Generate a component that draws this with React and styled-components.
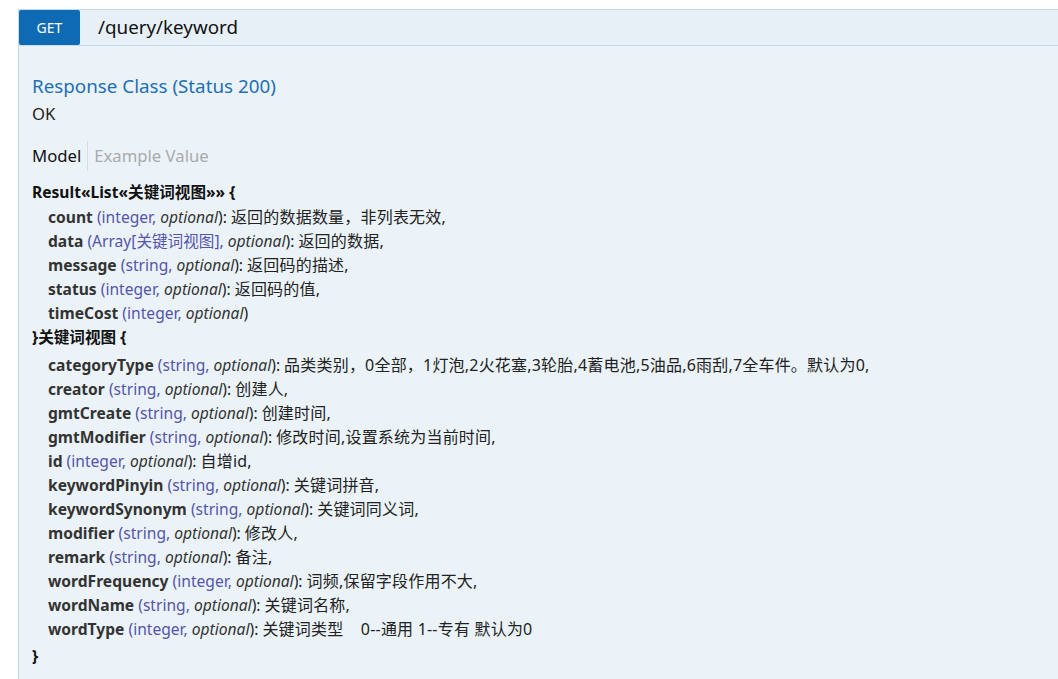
import styled, { createGlobalStyle } from 'styled-components'

const GlobalStyle = createGlobalStyle`
  html, body {
    margin: 0;
    padding: 0;
    background: #fff;
    overflow: hidden;
  }
  body {
    font-family: "Noto Sans", "Noto Sans CJK SC", sans-serif;
    color: #222;
  }
`

const props1 = [
	{ name: 'count', type: 'integer', desc: '返回的数据数量，非列表无效,' },
	{ name: 'data', type: 'Array[关键词视图]', desc: '返回的数据,' },
	{ name: 'message', type: 'string', desc: '返回码的描述,' },
	{ name: 'status', type: 'integer', desc: '返回码的值,' },
	{ name: 'timeCost', type: 'integer' },
]

const props2 = [
	{ name: 'categoryType', type: 'string', desc: '品类类别，0全部，1灯泡,2火花塞,3轮胎,4蓄电池,5油品,6雨刮,7全车件。默认为0,' },
	{ name: 'creator', type: 'string', desc: '创建人,' },
	{ name: 'gmtCreate', type: 'string', desc: '创建时间,' },
	{ name: 'gmtModifier', type: 'string', desc: '修改时间,设置系统为当前时间,' },
	{ name: 'id', type: 'integer', desc: '自增id,' },
	{ name: 'keywordPinyin', type: 'string', desc: '关键词拼音,' },
	{ name: 'keywordSynonym', type: 'string', desc: '关键词同义词,' },
	{ name: 'modifier', type: 'string', desc: '修改人,' },
	{ name: 'remark', type: 'string', desc: '备注,' },
	{ name: 'wordFrequency', type: 'integer', desc: '词频,保留字段作用不大,' },
	{ name: 'wordName', type: 'string', desc: '关键词名称,' },
	{ name: 'wordType', type: 'integer', desc: '关键词类型\u00a0\u00a0\u00a0\u00a00--通用 1--专有 默认为0' },
]

const PropLine = ({ p }) => (
	<Prop>
		<PropName>{p.name}</PropName>{' '}
		<PropType>({p.type}, </PropType>
		<PropOpt>optional</PropOpt>){p.desc ? ': ' : ''}
		{p.desc && <PropDesc>{p.desc}</PropDesc>}
	</Prop>
)

const App = () => {
	return (
		<>
			<GlobalStyle />
			<Operation>
				<Heading>
					<Method>GET</Method>
					<Path>/query/keyword</Path>
				</Heading>
				<Content>
					<SectionTitle>Response Class (Status 200)</SectionTitle>
					<Plain>OK</Plain>
					<Tabs>
						<Tab $active>Model</Tab>
						<Tab>Example Value</Tab>
					</Tabs>
					<Signature>
						<Strong>Result«List«关键词视图»» {'{'}</Strong>
						<PropBlock>
							{props1.map((p) => <PropLine key={p.name} p={p} />)}
						</PropBlock>
						<Strong>{'}'}关键词视图 {'{'}</Strong>
						<PropBlock $gap={4} $after={3}>
							{props2.map((p) => <PropLine key={p.name} p={p} />)}
						</PropBlock>
						<Strong>{'}'}</Strong>
					</Signature>
				</Content>
			</Operation>
		</>
	);
}

export default App;

const Operation = styled.div`
    margin: 9px 0 0 18px;
    border: 1px solid #c3d9ec;
    border-right: none;
    background-color: #ebf3f9;
    min-height: 720px;
`;

const Heading = styled.div`
    display: flex;
    align-items: center;
    height: 35px;
    background-color: #e7f0f7;
    border-bottom: 1px solid #c3d9ec;
`;

const Method = styled.span`
    display: flex;
    align-items: center;
    justify-content: center;
    width: 61px;
    height: 35px;
    background-color: #0f6ab4;
    color: white;
    border-radius: 2px;
    font-size: 14px;
    font-weight: 400;
`;

const Path = styled.span`
    margin-left: 18px;
    font-size: 18.8px;
    color: #111;
    padding-bottom: 2px;
`;

const Content = styled.div`
    padding: 28px 13px 20px 13px;
`;

const SectionTitle = styled.h4`
    margin: 0 0 4px 0;
    font-size: 18.8px;
    font-weight: 400;
    line-height: 24px;
    color: #1f6fb5;
`;

const Plain = styled.div`
    font-size: 16.7px;
    line-height: 24px;
    color: #222;
`;

const Tabs = styled.div`
    display: flex;
    align-items: center;
    height: 30px;
    margin-top: 15px;
    margin-bottom: 9px;
`;

const Tab = styled.div`
    font-size: 16.7px;
    line-height: 30px;
    padding-right: 6px;
    color: ${(p) => (p.$active ? '#111' : '#aaa')};

    & + & {
        padding-left: 6px;
        border-left: 1px solid #d8dde2;
    }
`;

const Signature = styled.div`
    font-size: 15.6px;
    line-height: 24px;
    color: #222;
`;

const Strong = styled.div`
    font-weight: 700;
    color: #111;
`;

const PropBlock = styled.div`
    margin: ${(p) => p.$gap ?? 1}px 0 ${(p) => p.$after ?? 0}px 16px;
`;

const Prop = styled.div`
    white-space: nowrap;
`;

const PropName = styled.span`
    font-weight: 700;
    color: #333;
`;

const PropType = styled.span`
    color: #55a;
`;

const PropOpt = styled.span`
    font-style: italic;
    color: #333;
`;

const PropDesc = styled.span`
    font-size: 16px;
    letter-spacing: 0.2px;
`;
